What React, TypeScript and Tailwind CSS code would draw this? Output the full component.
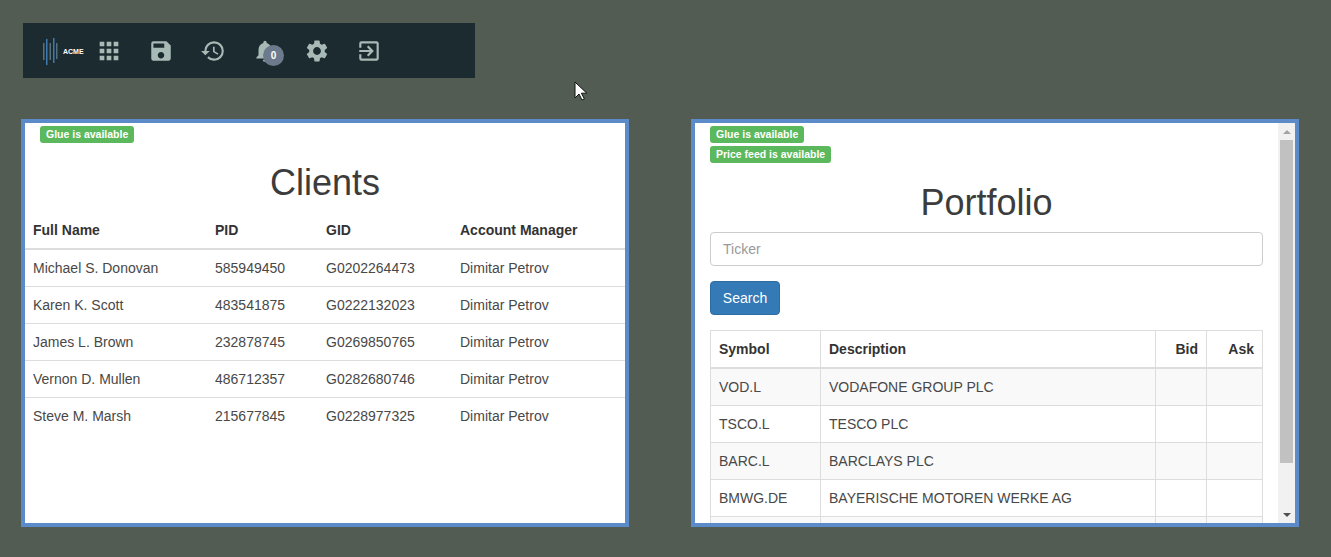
import { MdApps, MdExitToApp, MdHistory, MdNotifications, MdSave, MdSettings } from "react-icons/md";

const clients = [
  ["Michael S. Donovan", "585949450", "G0202264473"],
  ["Karen K. Scott", "483541875", "G0222132023"],
  ["James L. Brown", "232878745", "G0269850765"],
  ["Vernon D. Mullen", "486712357", "G0282680746"],
  ["Steve M. Marsh", "215677845", "G0228977325"],
];

const stocks = [
  ["VOD.L", "VODAFONE GROUP PLC"],
  ["TSCO.L", "TESCO PLC"],
  ["BARC.L", "BARCLAYS PLC"],
  ["BMWG.DE", "BAYERISCHE MOTOREN WERKE AG"],
  ["", ""],
];

function Label({ text }: { text: string }) {
  return (
    <div className="h-[17px] w-fit rounded-[3px] bg-[#5cb85c] px-[6px] text-[10.5px] font-bold leading-[16px] text-white">
      {text}
    </div>
  );
}

function Logo() {
  const bars = [
    [0, 9, 17, "#54707f"],
    [3, 5, 26, "#3f79ad"],
    [6.5, 9, 17, "#54707f"],
    [10, 4, 25, "#3f79ad"],
    [13, 9, 16, "#54707f"],
  ] as const;
  return (
    <div className="flex w-[40px] items-center">
      <svg width="15" height="34" viewBox="0 0 15 34" className="shrink-0">
        {bars.map(([x, y, h, c]) => (
          <rect key={x} x={x} y={y} width="1.5" height={h} fill={c} />
        ))}
      </svg>
      <span className="ml-[5px] mt-[2px] text-[7px] font-bold leading-none text-white">ACME</span>
    </div>
  );
}

function Toolbar() {
  const icon = "h-[52px] w-[52px] flex items-center justify-center text-[#a8bab6] text-[25px]";
  return (
    <div className="ml-[23px] flex h-[55px] w-[452px] items-center bg-[#1c2b30] pl-[20px]">
      <Logo />
      <div className={icon}><MdApps size={28} /></div>
      <div className={icon}><MdSave size={26} /></div>
      <div className={icon}><MdHistory size={26} /></div>
      <div className={icon + " relative"}>
        <MdNotifications size={26} />
        <span className="absolute left-[24px] top-[20px] flex h-[21px] w-[21px] items-center justify-center rounded-full bg-[#6d7a8b] text-[10px] font-bold text-white">
          0
        </span>
      </div>
      <div className={icon}><MdSettings size={26} /></div>
      <div className={icon}><MdExitToApp size={26} /></div>
    </div>
  );
}

function Clients() {
  return (
    <section className="h-[408px] w-[608px] overflow-hidden border-4 border-[#5b8bc9] bg-white">
      <div className="pl-[15px] pt-[3px]">
        <Label text="Glue is available" />
      </div>
      <h1 className="mt-[20px] text-center text-[36px] font-normal leading-[40px] text-[#3c3c3c]">Clients</h1>
      <table className="mt-[8px] w-[600px] table-fixed border-collapse text-[14px] text-[#484848]">
        <colgroup>
          <col className="w-[182px]" />
          <col className="w-[111px]" />
          <col className="w-[134px]" />
          <col />
        </colgroup>
        <thead className="text-[#333]">
          <tr className="h-[38px] border-b-2 border-[#ddd] text-left">
            <th className="px-2 pt-[2px] font-bold">Full Name</th>
            <th className="px-2 pt-[2px] font-bold">PID</th>
            <th className="px-2 pt-[2px] font-bold">GID</th>
            <th className="px-2 pt-[2px] font-bold">Account Manager</th>
          </tr>
        </thead>
        <tbody>
          {clients.map((c) => (
            <tr key={c[1]} className="h-[37px] border-b border-[#ddd] last:border-b-0">
              <td className="px-2 pt-[2px]">{c[0]}</td>
              <td className="px-2 pt-[2px]">{c[1]}</td>
              <td className="px-2 pt-[2px]">{c[2]}</td>
              <td className="px-2 pt-[2px]">Dimitar Petrov</td>
            </tr>
          ))}
        </tbody>
      </table>
    </section>
  );
}

function Scrollbar() {
  return (
    <div className="flex w-[17px] shrink-0 flex-col items-center bg-[#f1f1f1]">
      <div className="flex h-[17px] items-center justify-center">
        <div className="h-0 w-0 border-x-[4px] border-b-[4px] border-x-transparent border-b-[#a3a3a3]" />
      </div>
      <div className="h-[323px] w-[13px] bg-[#c1c1c1]" />
      <div className="flex flex-1 items-end justify-center pb-[6px]">
        <div className="h-0 w-0 border-x-[4px] border-t-[4px] border-x-transparent border-t-[#505050]" />
      </div>
    </div>
  );
}

function Portfolio() {
  const cell = "border border-[#ddd] px-2";
  return (
    <section className="flex h-[408px] w-[608px] overflow-hidden border-4 border-[#5b8bc9] bg-white">
      <div className="h-full min-w-0 flex-1 overflow-hidden px-[15px] pt-[3px]">
        <Label text="Glue is available" />
        <div className="mt-[3px]">
          <Label text="Price feed is available" />
        </div>
        <h1 className="mt-[20px] text-center text-[36px] font-normal leading-[40px] text-[#3c3c3c]">Portfolio</h1>
        <input
          placeholder="Ticker"
          className="mt-[9px] block h-[34px] w-full rounded-[4px] border border-[#ccc] px-3 text-[14px] text-[#555] placeholder:text-[#999]"
        />
        <button className="mt-[15px] block h-[34px] w-[70px] rounded-[4px] border border-[#2e6da4] bg-[#337ab7] text-[14px] text-white">
          Search
        </button>
        <table className="mt-[15px] w-[553px] table-fixed border-collapse text-[14px] text-[#484848]">
          <colgroup>
            <col className="w-[110px]" />
            <col className="w-[335px]" />
            <col className="w-[51px]" />
            <col />
          </colgroup>
          <thead className="text-[#333]">
            <tr className="h-[37px] border-b-2 border-[#ddd]">
              <th className={cell + " pt-[2px] text-left font-bold"}>Symbol</th>
              <th className={cell + " pt-[2px] text-left font-bold"}>Description</th>
              <th className={cell + " pt-[2px] text-right font-bold"}>Bid</th>
              <th className={cell + " pt-[2px] text-right font-bold"}>Ask</th>
            </tr>
          </thead>
          <tbody>
            {stocks.map((s, i) => (
              <tr key={i} className="group h-[37px] odd:bg-[#f9f9f9] first:h-[38px]">
                <td className={cell + " group-first:pt-[2px]"}>{s[0]}</td>
                <td className={cell + " group-first:pt-[2px]"}>{s[1]}</td>
                <td className={cell} />
                <td className={cell} />
              </tr>
            ))}
          </tbody>
        </table>
      </div>
      <Scrollbar />
    </section>
  );
}

export default function App() {
  return (
    <div className="relative h-[557px] overflow-hidden bg-[#525c52] pt-[23px] font-['Liberation_Sans',Arial,sans-serif]">
      <Toolbar />
      <div className="ml-[21px] mt-[41px] flex gap-[62px]">
        <Clients />
        <Portfolio />
      </div>
      <svg width="14" height="20" viewBox="0 0 14 20" className="absolute left-[574px] top-[81px]">
        <path d="M1 1v16l4-4 3 6 2.4-1-3-5.8h5.4z" fill="#fff" stroke="#111" strokeWidth="1" />
      </svg>
    </div>
  );
}
